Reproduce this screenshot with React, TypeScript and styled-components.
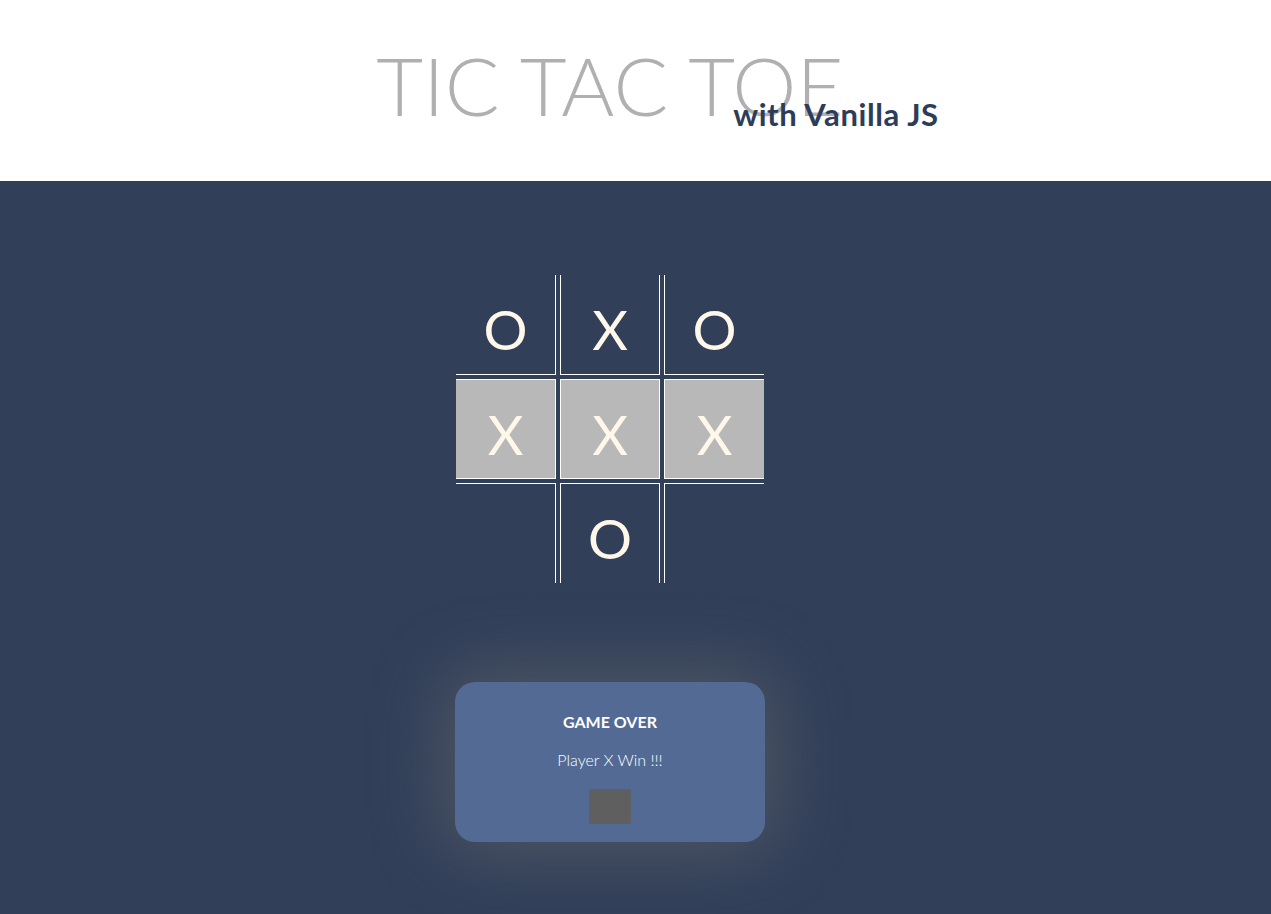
import React from 'react'
import styled, { createGlobalStyle } from 'styled-components'

const GlobalStyle = createGlobalStyle`
  html, body {
    margin: 0;
    padding: 0;
    background: #313f59;
    font-family: Lato, 'Open Sans', sans-serif;
  }
`

const Header = styled.header`
  height: 181px;
  background: #fff;
  display: flex;
  justify-content: center;
  padding-right: 51px;
  box-sizing: border-box;
`

const TitleWrap = styled.div`
  position: relative;
  margin-top: 40px;
  height: 90px;
`

const Title = styled.h1`
  margin: 0;
  font-size: 81px;
  font-weight: 300;
  line-height: 90px;
  color: #b0b0b0;
  letter-spacing: 0.3px;
  white-space: nowrap;
`

const Subtitle = styled.span`
  position: absolute;
  left: 357px;
  top: 55px;
  font-size: 31px;
  font-weight: 700;
  letter-spacing: 0.6px;
  color: #2c3c59;
  white-space: nowrap;
`

const Main = styled.main`
  min-height: 733px;
  display: flex;
  flex-direction: column;
  align-items: center;
  padding: 94px 51px 0 0;
  box-sizing: border-box;
`

const Board = styled.div`
  display: grid;
  grid-template-columns: repeat(3, 100px);
  grid-template-rows: repeat(3, 100px);
  gap: 4px;
`

const Cell = styled.div<{ $row: number; $col: number; $win?: boolean }>`
  box-sizing: border-box;
  display: flex;
  align-items: center;
  justify-content: center;
  padding-top: 10px;
  background: ${(p) => (p.$win ? '#b8b8b8' : 'transparent')};
  border-style: solid;
  border-color: #fff;
  border-width: ${(p) =>
    `${p.$row > 0 ? 1 : 0}px ${p.$col < 2 ? 1 : 0}px ${p.$row < 2 ? 1 : 0}px ${p.$col > 0 ? 1 : 0}px`};
  color: #fff8ea;
  font-size: 55px;
  font-weight: 400;
  line-height: 1;
`

const Modal = styled.div`
  margin-top: 99px;
  width: 310px;
  height: 160px;
  border-radius: 20px;
  background: #536b94;
  box-shadow: 0 0 70px 12px rgba(115, 115, 115, 0.45);
  display: flex;
  flex-direction: column;
  align-items: center;
  padding-top: 30px;
  box-sizing: border-box;
  color: #fff;
`

const ModalTitle = styled.div`
  font-size: 16px;
  font-weight: 700;
  line-height: 20px;
`

const ModalText = styled.div`
  margin-top: 18px;
  font-size: 16px;
  font-weight: 300;
  line-height: 20px;
`

const RestartButton = styled.button`
  margin-top: 19px;
  width: 42px;
  height: 35px;
  border: none;
  border-radius: 2px;
  background: #5f5f5f;
  padding: 0;
`

const board = ['O', 'X', 'O', 'X', 'X', 'X', '', 'O', '']
const winning = [3, 4, 5]

export default function App() {
  return (
    <>
      <GlobalStyle />
      <Header>
        <TitleWrap>
          <Title>TIC TAC TOE</Title>
          <Subtitle>with Vanilla JS</Subtitle>
        </TitleWrap>
      </Header>
      <Main>
        <Board>
          {board.map((v, i) => (
            <Cell
              key={i}
              $row={Math.floor(i / 3)}
              $col={i % 3}
              $win={winning.includes(i)}
            >
              {v}
            </Cell>
          ))}
        </Board>
        <Modal>
          <ModalTitle>GAME OVER</ModalTitle>
          <ModalText>Player X Win !!!</ModalText>
          <RestartButton />
        </Modal>
      </Main>
    </>
  )
}
